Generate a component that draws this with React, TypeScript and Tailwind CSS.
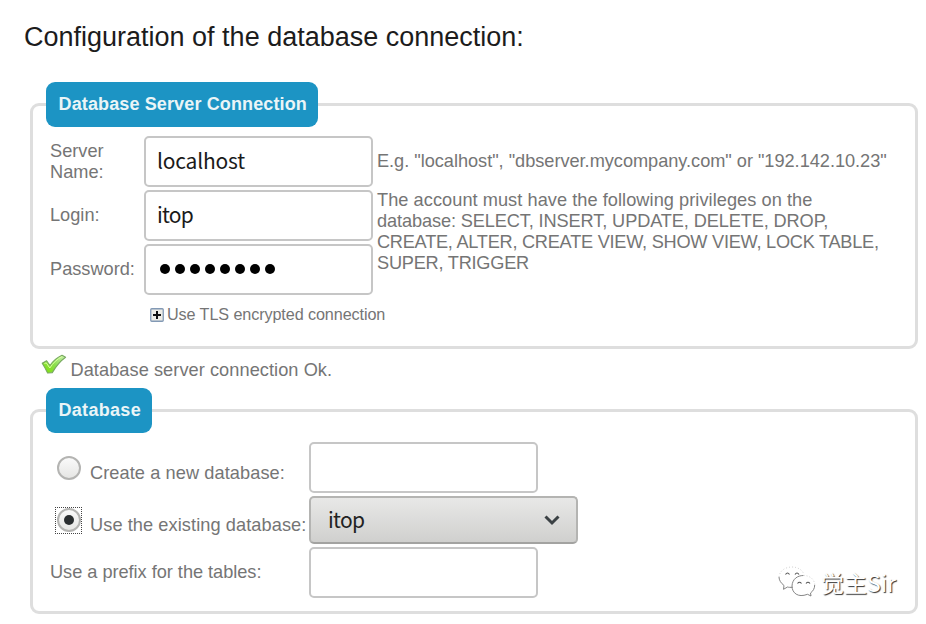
import type { ReactNode } from 'react'

const inputClass =
  'block h-[51px] w-[229px] rounded-[5px] border-2 border-[#c6c6c6] bg-white px-[11px] pb-[3px] font-["Noto_Sans_CJK_SC",sans-serif] text-[21px] text-[#1a1a1a] outline-none'

type PanelProps = {
  title: string
  className: string
  legendClassName: string
  children: ReactNode
}

function Panel({ title, className, legendClassName, children }: PanelProps) {
  return (
    <fieldset className={`ml-[30px] w-[888px] rounded-[9px] border-[3px] border-[#dedede] px-[13px] ${className}`}>
      <legend
        className={`h-[45px] rounded-[9px] bg-[#1c94c4] pr-[11.5px] pl-[12.5px] text-[18px] leading-[44px] font-bold whitespace-nowrap text-[#eaf5f7] ${legendClassName}`}
      >
        {title}
      </legend>
      {children}
    </fieldset>
  )
}

function CheckIcon() {
  return (
    <svg width="26" height="22" viewBox="0 0 26 22">
      <defs>
        <linearGradient id="check" x1="1" y1="0" x2="0" y2="1">
          <stop offset="0" stopColor="#c9f0b4" />
          <stop offset="0.5" stopColor="#8be04e" />
          <stop offset="1" stopColor="#7ee000" />
        </linearGradient>
      </defs>
      <path
        d="M1.2 9.2 L5.6 6.8 L9 11.5 C12 7 16 3.4 21 1.2 L24.6 3.2 C19.5 6.8 15 12.2 11.3 18.6 L6.6 19 C5 15.6 3.2 12.2 1.2 9.2 Z"
        fill="url(#check)"
        stroke="#78a860"
        strokeWidth="1.1"
        strokeLinejoin="round"
      />
      <path d="M3.4 9.7 L5.2 8.8 L8.8 14 C12 9 16.5 4.6 21.2 2.6" fill="none" stroke="#d9ff9c" strokeWidth="1" />
    </svg>
  )
}

function PlusIcon() {
  return (
    <svg width="14" height="14" viewBox="0 0 14 14">
      <rect x="0.75" y="0.75" width="12.5" height="12.5" rx="1" fill="#efede6" stroke="#8299b5" strokeWidth="1.3" />
      <path d="M3 7h8M7 3v8" stroke="#111" strokeWidth="2" />
    </svg>
  )
}

function Radio({ checked }: { checked?: boolean }) {
  return (
    <span
      className={`flex size-[27px] items-center justify-center border-[1.5px] border-dotted ${checked ? 'border-[#444]' : 'border-transparent'}`}
    >
      <span className="flex size-[24px] shrink-0 items-center justify-center rounded-full border-2 border-[#b4b4b2] bg-linear-to-b from-[#fafafa] to-[#e6e6e4]">
        {checked && <span className="size-[10px] rounded-full bg-[#2a2e30]" />}
      </span>
    </span>
  )
}

function Watermark() {
  return (
    <div className="absolute top-[566px] left-[778px] flex items-center gap-[5px]">
      <svg width="38" height="34" viewBox="0 0 38 34" fill="none" stroke="#777" strokeWidth="0.9">
        <path d="M14.5 21.3 C12.5 21.4 10.5 21.4 9.5 21 L5.5 23.3 L6 19.5 C2.8 17 1 14 1 11" />
        <path d="M1 11 C1.5 5 7 1 14 1 C20 1 24.5 4 26 8.5" stroke="#ccc" strokeDasharray="1 2" />
        <path d="M14 20 C14.3 13 19.5 9.5 25.5 9.5" />
        <path d="M25.5 9.5 C32 9.5 36.7 13.5 36.7 19" stroke="#ccc" strokeDasharray="1 2" />
        <path d="M36.7 19 C36.7 22.5 35 25.2 32.5 27 L33 30 L29.5 28.3 C20 32 14 27 14 20" />
        <path d="M7.5 8.5 q2-3 4 0 M17 8.5 q2-3 4 0 M19.5 17.5 q2-2.5 4 0 M28 17.5 q2-2.5 4 0" stroke="#555" strokeWidth="1.1" />
      </svg>
      <span className="-mt-[3px] font-['Noto_Sans_CJK_SC',sans-serif] text-[23px] leading-[34px] text-white [text-shadow:1px_1px_1px_#333]">
        觉主Sir
      </span>
    </div>
  )
}

export default function App() {
  return (
    <main className="relative h-[624px] w-[926px] overflow-hidden bg-white font-['Liberation_Sans',Arial,sans-serif] text-[18.2px] leading-[21px] text-[#757575]">
      <h1 className="h-[82px] pt-[22px] pl-6 text-[27px] leading-[31px] text-[#1c1c1c]">
        Configuration of the database connection:
      </h1>

      {/* Server connection */}
      <Panel title="Database Server Connection" className="h-[267px]" legendClassName="tracking-[0.13px]">
        <div className="ml-1 grid grid-cols-[94px_229px_1fr] gap-y-[3px] pt-[9px]">
          <label className="self-center pr-8">Server Name:</label>
          <input className={`${inputClass} tracking-[-0.2px]`} defaultValue="localhost" />
          <p className="self-center pl-1 tracking-[-0.03px] whitespace-nowrap">
            E.g. "localhost", "dbserver.mycompany.com" or "192.142.10.23"
          </p>

          <label className="self-center">Login:</label>
          <input className={`${inputClass} tracking-[-0.8px]`} defaultValue="itop" />
          <p className="row-span-2 pl-1 whitespace-nowrap">
            <span className="block tracking-[0.05px]">The account must have the following privileges on the</span>
            <span className="block tracking-[-0.12px]">database: SELECT, INSERT, UPDATE, DELETE, DROP,</span>
            <span className="block tracking-[-0.26px]">CREATE, ALTER, CREATE VIEW, SHOW VIEW, LOCK TABLE,</span>
            <span className="block tracking-[-0.24px]">SUPER, TRIGGER</span>
          </p>

          <label className="self-center">Password:</label>
          <div className={`${inputClass} flex items-center gap-[5px] pb-px! pl-[14px]!`}>
            {[...Array(8)].map((_, index) => (
              <span key={index} className="size-[10px] rounded-full bg-black" />
            ))}
          </div>
        </div>
        <div className="mt-[9px] ml-[104px] flex items-center gap-[3px] text-[16.2px] tracking-[-0.1px]">
          <PlusIcon />
          <span>Use TLS encrypted connection</span>
        </div>
      </Panel>

      <div className="flex h-[39px] items-start pl-[41px]">
        <div className="pt-[5px]">
          <CheckIcon />
        </div>
        <span className="pt-[10.5px] pl-[3.5px] tracking-[0.06px]">Database server connection Ok.</span>
      </div>

      {/* Database selection */}
      <Panel title="Database" className="h-[226px]" legendClassName="tracking-[0.3px]">
        <div className="ml-1 grid grid-cols-[259px_1fr] items-center gap-y-[3px] pt-[9px]">
          <div className="flex items-center gap-2 pl-[5px] tracking-[0.08px] whitespace-nowrap">
            <Radio />
            <label className="pt-[11px]">Create a new database:</label>
          </div>
          <input className={inputClass} />

          <div className="flex items-center gap-2 pl-[5px] tracking-[0.08px] whitespace-nowrap">
            <Radio checked />
            <label className="pt-[11px]">Use the existing database:</label>
          </div>
          <button className="flex h-[48px] w-[269px] items-center justify-between rounded-[5px] border-2 border-[#b4b4b2] border-b-[#a3a3a1] bg-linear-to-b from-[#e8e8e7] to-[#d0d0ce] pr-4 pb-[2px] pl-[17px] font-['Noto_Sans_CJK_SC',sans-serif] text-[21px] tracking-[-0.7px] text-[#222]">
            itop
            <svg className="mt-[2px]" width="16" height="11" viewBox="0 0 16 11" fill="none" stroke="#3b4144" strokeWidth="3">
              <path d="M1.5 1.5 L8 8 L14.5 1.5" />
            </svg>
          </button>

          <label className="tracking-[-0.03px]">Use a prefix for the tables:</label>
          <input className={inputClass} />
        </div>
      </Panel>

      <Watermark />
    </main>
  )
}
